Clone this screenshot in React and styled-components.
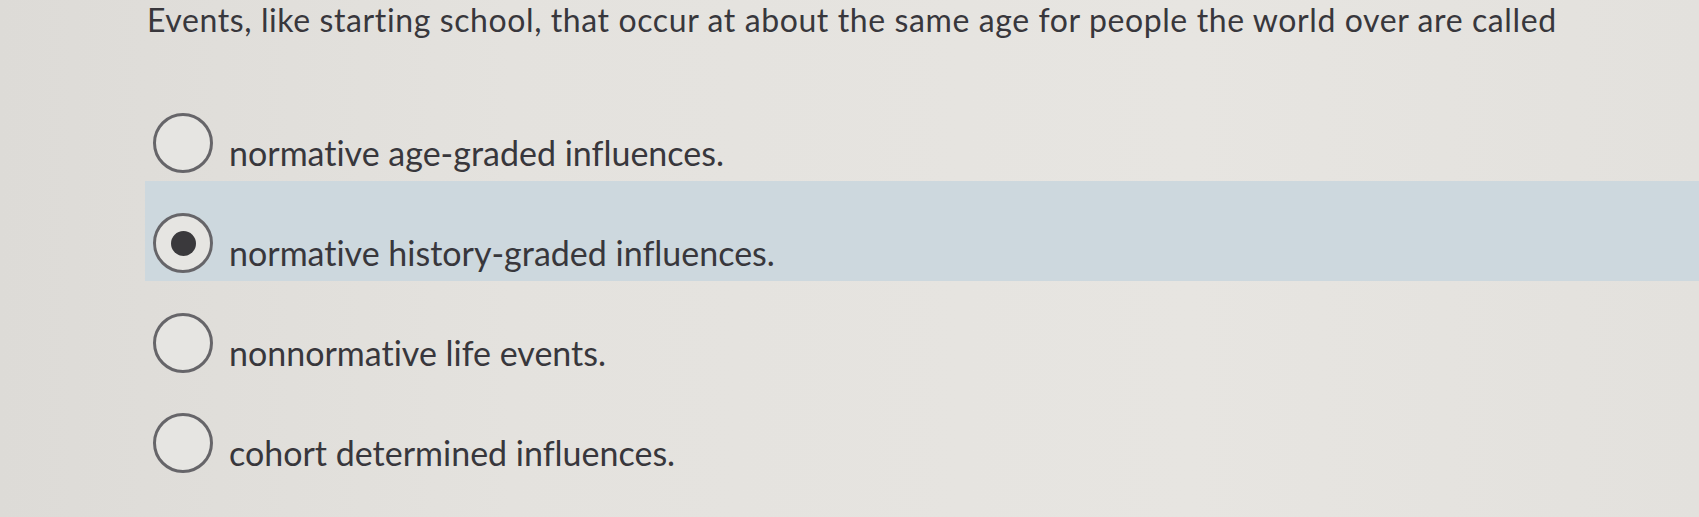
import React from "react";
import styled, { createGlobalStyle } from "styled-components";

const GlobalStyle = createGlobalStyle`
  html, body {
    margin: 0;
    padding: 0;
    background: #e3e1dd;
  }
  body {
    font-family: Lato, "Open Sans", sans-serif;
    color: #36353a;
    font-variant-ligatures: none;
  }
`;

const Page = styled.div`
  width: 1699px;
  height: 517px;
  overflow: hidden;
  background: linear-gradient(90deg, #dddbd7 0%, #e4e2de 30%, #e7e5e1 70%, #e3e1dd 100%);
`;

const Question = styled.div`
  padding-left: 147px;
  font-size: 32px;
  line-height: normal;
  letter-spacing: 0.6px;
  color: #38373c;
  white-space: nowrap;
`;

const Options = styled.div`
  margin-top: 42px;
  margin-left: 145px;
  display: flex;
  flex-direction: column;
`;

const Option = styled.label`
  height: 100px;
  box-sizing: border-box;
  padding: 32px 0 0 8px;
  display: flex;
  align-items: flex-start;
  gap: 16px;
  background: ${(p) => (p.selected ? "#cdd8de" : "transparent")};
`;

// radio circle, filled dot when selected
const Radio = styled.span`
  width: 60px;
  height: 60px;
  flex: none;
  box-sizing: border-box;
  border-radius: 50%;
  border: 3px solid #666569;
  background: #e6e5e2;
  display: flex;
  align-items: center;
  justify-content: center;
  &::after {
    content: "";
    display: ${(p) => (p.selected ? "block" : "none")};
    width: 25px;
    height: 25px;
    border-radius: 50%;
    background: #3a393c;
  }
`;

const Label = styled.span`
  font-size: 34px;
  line-height: 34px;
  margin-top: 23px;
  color: #38373c;
`;

const answers = [
  "normative age-graded influences.",
  "normative history-graded influences.",
  "nonnormative life events.",
  "cohort determined influences.",
];

export default function App() {
  const chosen = 1;
  return (
    <Page>
      <GlobalStyle />
      <Question>
        Events, like starting school, that occur at about the same age for
        people the world over are called
      </Question>
      <Options>
        {answers.map((a, i) => (
          <Option key={a} selected={i === chosen}>
            <Radio selected={i === chosen} />
            <Label>{a}</Label>
          </Option>
        ))}
      </Options>
    </Page>
  );
}
